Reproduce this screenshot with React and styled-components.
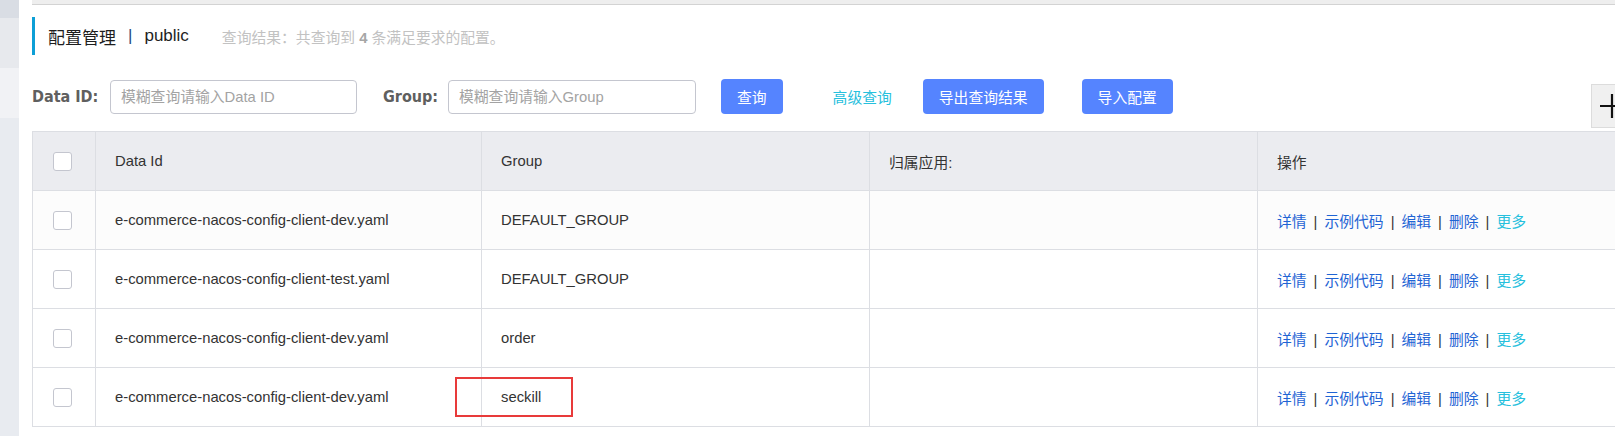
import React from "react";
import styled, { createGlobalStyle } from "styled-components";

const GlobalStyle = createGlobalStyle`
  html, body { margin: 0; padding: 0; background: #fff; overflow: hidden; }
  body {
    font-family: "Liberation Sans", "Noto Sans CJK SC", sans-serif;
    color: #333;
    width: 1615px;
    height: 436px;
  }
  * { box-sizing: border-box; }
`;

const Page = styled.div`
  display: flex;
  width: 1615px;
  height: 436px;
  position: relative;
  overflow: hidden;
`;

const Sidebar = styled.div`
  width: 19px;
  flex: none;
  display: flex;
  flex-direction: column;
`;

const Band = styled.div`
  height: ${(p) => (p.$h ? `${p.$h}px` : "auto")};
  flex: ${(p) => (p.$h ? "none" : "1")};
  background: ${(p) => p.$bg};
`;

const Main = styled.div`
  flex: 1;
  padding-left: 13px;
  display: flex;
  flex-direction: column;
  min-width: 0;
`;

const TopStrip = styled.div`
  height: 5px;
  background: #eeeeee;
  border-bottom: 1px solid #d3d3d3;
  margin-right: -20px;
`;

const TitleBar = styled.div`
  margin-top: 12px;
  height: 38px;
  border-left: 3px solid #0d9fd6;
  padding-left: 13px;
  display: flex;
  align-items: center;
`;

const Title = styled.span`
  font-size: 17px;
  color: #1e1e1e;
`;

const TitleSep = styled.span`
  margin: 0 12px;
  color: #2a4a7c;
`;

const Result = styled.span`
  margin-left: 33px;
  font-size: 14.8px;
  color: #c2c2c2;
  b {
    color: #a6a6a6;
    font-weight: bold;
  }
`;

const FormRow = styled.div`
  margin-top: 24px;
  height: 35px;
  display: flex;
  align-items: center;
`;

const Label = styled.label`
  width: ${(p) => p.$w}px;
  margin-left: ${(p) => p.$ml || 0}px;
  flex: none;
  font-size: 16px;
  font-weight: bold;
  color: #5f5f5f;
  font-family: "DejaVu Sans Condensed", "Liberation Sans", sans-serif;
`;

const Input = styled.input`
  width: ${(p) => p.$w}px;
  height: 34px;
  flex: none;
  border: 1px solid #c4c6cf;
  border-radius: 4px;
  padding: 0 10px;
  font-size: 14.8px;
  font-family: "Liberation Sans", "Noto Sans CJK SC", sans-serif;
  outline: none;
  &::placeholder {
    color: #a3a3a3;
  }
`;

const Button = styled.button`
  margin-left: ${(p) => p.$ml}px;
  height: 35px;
  flex: none;
  padding: 0 16px;
  border: none;
  border-radius: 4px;
  background: #5584ff;
  color: #fff;
  font-size: 14.8px;
  font-family: "Liberation Sans", "Noto Sans CJK SC", sans-serif;
`;

const LinkText = styled.span`
  margin-left: ${(p) => p.$ml}px;
  flex: none;
  color: #26c0dd;
  font-size: 14.8px;
`;

const PlusBox = styled.div`
  position: absolute;
  left: 1591px;
  top: 84px;
  width: 40px;
  height: 44px;
  background: #f0f0f0;
  border: 1px solid #dcdcdc;
  display: flex;
  align-items: center;
  padding-left: 7px;
`;

const Table = styled.table`
  margin-top: 17px;
  width: 1613px;
  table-layout: fixed;
  border-collapse: collapse;
  font-size: 14.8px;
`;

const Th = styled.th`
  height: 59px;
  padding: 0 0 0 ${(p) => p.$pl ?? 19}px;
  background: #ebecf0;
  border: 1px solid #dcdee3;
  text-align: left;
  font-weight: normal;
  color: #333;
`;

const Tr = styled.tr`
  background: ${(p) => p.$bg || "#fff"};
`;

const Td = styled.td`
  height: 59px;
  padding: 0 0 0 ${(p) => p.$pl ?? 19}px;
  border: 1px solid #dcdee3;
  color: #333;
  position: relative;
  white-space: nowrap;
`;

const Check = styled.span`
  display: block;
  width: 19px;
  height: 19px;
  margin-left: 1px;
  border: 1px solid #c4c6cf;
  border-radius: 3px;
  background: #fff;
`;

const Action = styled.span`
  color: ${(p) => (p.$more ? "#26c0dd" : "#1f64d4")};
`;

const Pipe = styled.span`
  margin: 0 7px;
  color: #333;
`;

const Highlight = styled.div`
  position: absolute;
  left: -27px;
  top: 9px;
  width: 118px;
  height: 40px;
  border: 2px solid #e83a3a;
  pointer-events: none;
`;

const rows = [
  { id: "e-commerce-nacos-config-client-dev.yaml", group: "DEFAULT_GROUP", bg: "#fcfcfc" },
  { id: "e-commerce-nacos-config-client-test.yaml", group: "DEFAULT_GROUP" },
  { id: "e-commerce-nacos-config-client-dev.yaml", group: "order" },
  { id: "e-commerce-nacos-config-client-dev.yaml", group: "seckill", mark: true },
];

const Actions = () => (
  <>
    <Action>详情</Action>
    <Pipe>|</Pipe>
    <Action>示例代码</Action>
    <Pipe>|</Pipe>
    <Action>编辑</Action>
    <Pipe>|</Pipe>
    <Action>删除</Action>
    <Pipe>|</Pipe>
    <Action $more>更多</Action>
  </>
);

export default function App() {
  return (
    <>
      <GlobalStyle />
      <Page>
        <Sidebar>
          <Band $h={18} $bg="#d9dde4" />
          <Band $h={50} $bg="#e7e9ed" />
          <Band $h={50} $bg="#f1f2f5" />
          <Band $bg="#e8ebf0" />
        </Sidebar>
        <Main>
          <TopStrip />
          <TitleBar>
            <Title>配置管理</Title>
            <Title>
              <TitleSep>|</TitleSep>public
            </Title>
            <Result>
              查询结果：共查询到 <b>4</b> 条满足要求的配置。
            </Result>
          </TitleBar>
          <FormRow>
            <Label $w={78}>Data ID:</Label>
            <Input $w={247} placeholder="模糊查询请输入Data ID" />
            <Label $w={65} $ml={26}>Group:</Label>
            <Input $w={248} placeholder="模糊查询请输入Group" />
            <Button $ml={25}>查询</Button>
            <LinkText $ml={50}>高级查询</LinkText>
            <Button $ml={31}>导出查询结果</Button>
            <Button $ml={38}>导入配置</Button>
          </FormRow>
          <Table>
            <colgroup>
              <col style={{ width: 63 }} />
              <col style={{ width: 386 }} />
              <col style={{ width: 388 }} />
              <col style={{ width: 388 }} />
              <col style={{ width: 388 }} />
            </colgroup>
            <thead>
              <tr>
                <Th>
                  <Check />
                </Th>
                <Th>Data Id</Th>
                <Th>Group</Th>
                <Th>归属应用:</Th>
                <Th>操作</Th>
              </tr>
            </thead>
            <tbody>
              {rows.map((r, i) => (
                <Tr key={i} $bg={r.bg}>
                  <Td>
                    <Check />
                  </Td>
                  <Td>{r.id}</Td>
                  <Td>
                    {r.group}
                    {r.mark && <Highlight />}
                  </Td>
                  <Td />
                  <Td>
                    <Actions />
                  </Td>
                </Tr>
              ))}
            </tbody>
          </Table>
        </Main>
        <PlusBox>
          <svg width="26" height="26" viewBox="0 0 26 26">
            <path d="M1 13h24M13 1v24" stroke="#111" strokeWidth="2.2" fill="none" />
          </svg>
        </PlusBox>
      </Page>
    </>
  );
}
